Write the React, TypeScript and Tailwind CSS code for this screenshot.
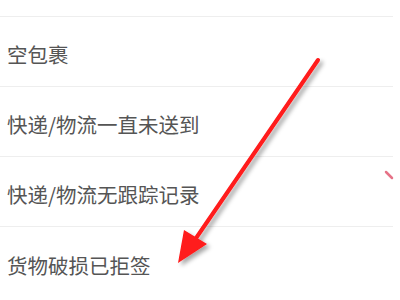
import React, { FC } from "react";

const rows = ["商品破损/少件", "空包裹", "快递/物流一直未送到", "快递/物流无跟踪记录", "货物破损已拒签"];

const Arrow: FC = () => (
  <svg
    className="pointer-events-none absolute left-0 top-0"
    width="400"
    height="300"
    viewBox="0 0 400 300"
  >
    <defs>
      <filter id="sh" x="-20%" y="-20%" width="140%" height="140%">
        <feDropShadow dx="3" dy="3" stdDeviation="2" floodColor="#000" floodOpacity="0.35" />
      </filter>
    </defs>
    <g filter="url(#sh)">
      <line x1="318" y1="60" x2="192" y2="244" stroke="#ff1a1a" strokeWidth="4" strokeLinecap="round" />
      <polygon points="178,263 184,230 207,244" fill="#ff1a1a" />
    </g>
    <line x1="386" y1="172" x2="392" y2="178" stroke="#e0506a" strokeWidth="2.5" strokeLinecap="round" opacity="0.8" />
  </svg>
);

export default function App() {
  return (
    <div className="relative h-[300px] w-[400px] overflow-hidden bg-white">
      <div className="-mt-[53px] w-[393px]">
        {rows.map((r) => (
          <div
            key={r}
            className="flex h-[70px] items-center border-b border-[#eeeeee] pl-[7px] pt-[6px] text-[20.5px] text-[#555555] last:border-b-0"
            style={{ fontFamily: '"Noto Sans CJK SC", "Noto Sans", sans-serif' }}
          >
            {r}
          </div>
        ))}
      </div>
      <Arrow />
    </div>
  );
}
